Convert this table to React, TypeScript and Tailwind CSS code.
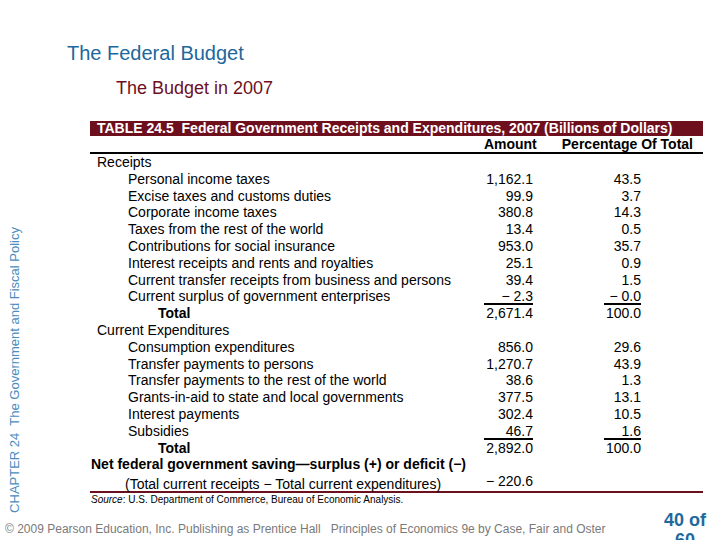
import React from 'react';

type Row = {
    label: string;
    indent: string;
    bold?: boolean;
    amt?: string;
    pct?: string;
    underline?: boolean;
};

const rows: Row[] = [
    { label: 'Receipts', indent: 'pl-[7px]' },
    { label: 'Personal income taxes', indent: 'pl-[38px]', amt: '1,162.1', pct: '43.5' },
    { label: 'Excise taxes and customs duties', indent: 'pl-[38px]', amt: '99.9', pct: '3.7' },
    { label: 'Corporate income taxes', indent: 'pl-[38px]', amt: '380.8', pct: '14.3' },
    { label: 'Taxes from the rest of the world', indent: 'pl-[38px]', amt: '13.4', pct: '0.5' },
    { label: 'Contributions for social insurance', indent: 'pl-[38px]', amt: '953.0', pct: '35.7' },
    { label: 'Interest receipts and rents and royalties', indent: 'pl-[38px]', amt: '25.1', pct: '0.9' },
    { label: 'Current transfer receipts from business and persons', indent: 'pl-[38px]', amt: '39.4', pct: '1.5' },
    { label: 'Current surplus of government enterprises', indent: 'pl-[38px]', amt: '− 2.3', pct: '− 0.0', underline: true },
    { label: 'Total', indent: 'pl-[68px]', bold: true, amt: '2,671.4', pct: '100.0' },
    { label: 'Current Expenditures', indent: 'pl-[7px]' },
    { label: 'Consumption expenditures', indent: 'pl-[38px]', amt: '856.0', pct: '29.6' },
    { label: 'Transfer payments to persons', indent: 'pl-[38px]', amt: '1,270.7', pct: '43.9' },
    { label: 'Transfer payments to the rest of the world', indent: 'pl-[38px]', amt: '38.6', pct: '1.3' },
    { label: 'Grants-in-aid to state and local governments', indent: 'pl-[38px]', amt: '377.5', pct: '13.1' },
    { label: 'Interest payments', indent: 'pl-[38px]', amt: '302.4', pct: '10.5' },
    { label: 'Subsidies', indent: 'pl-[38px]', amt: '46.7', pct: '1.6', underline: true },
    { label: 'Total', indent: 'pl-[68px]', bold: true, amt: '2,892.0', pct: '100.0' },
    { label: 'Net federal government saving—surplus (+) or deficit (−)', indent: 'pl-[1px]', bold: true },
];

function TableRow({ row }: { row: Row }) {
    return (
        <div className="flex h-[16.8px] leading-[16.8px]">
            <div className={`w-[363px] whitespace-nowrap ${row.indent} ${row.bold ? 'font-bold' : ''}`}>
                {row.label}
            </div>
            <div className="w-[80px] flex justify-end">
                <span className={row.underline ? 'w-[49px] text-right border-b-2 border-black' : ''}>{row.amt}</span>
            </div>
            <div className="w-[108px] flex justify-end">
                <span className={row.underline ? 'w-[37px] text-right border-b-2 border-black' : ''}>{row.pct}</span>
            </div>
        </div>
    );
}

export default function App() {
    return (
        <div className="w-[720px] h-[540px] overflow-hidden bg-white flex flex-col font-['Liberation_Sans',Arial,sans-serif] text-black">
            <div className="flex h-[507px]">
                {/* Running chapter label */}
                <div className="w-[28px] flex flex-col items-center justify-end">
                    <div className="[writing-mode:vertical-rl] rotate-180 text-[13px] leading-[15px] text-[#4a8cc0] whitespace-pre translate-y-[8px]">
                        {'CHAPTER 24  The Government and Fiscal Policy'}
                    </div>
                </div>

                <div className="flex-1 flex flex-col">
                    <h1 className="pt-[42px] pl-[39px] text-[20px] leading-[23px] text-[#21679b]">The Federal Budget</h1>
                    <h2 className="mt-[13px] pl-[88px] text-[18px] leading-[21px] text-[#6d0f1e]">The Budget in 2007</h2>

                    {/* Table */}
                    <div className="mt-[22px] ml-[62px] w-[613px] text-[14px]">
                        <div className="h-[15px] bg-[#6e0f1e] text-white font-bold leading-[15px] pl-[7px] whitespace-pre">
                            {'TABLE 24.5  Federal Government Receipts and Expenditures, 2007 (Billions of Dollars)'}
                        </div>
                        <div className="flex justify-end gap-[25px] pr-[10px] h-[16px] leading-[17px] font-bold border-b-2 border-black box-content">
                            <span>Amount</span>
                            <span>Percentage Of Total</span>
                        </div>
                        {rows.map((row, i) => (
                            <TableRow key={i} row={row} />
                        ))}
                        <div className="flex h-[18px] leading-[16.8px] border-b-2 border-[#6e0f1e] box-content">
                            <div className="w-[363px] pl-[35px] whitespace-nowrap pt-[3px]">
                                (Total current receipts − Total current expenditures)
                            </div>
                            <div className="w-[80px] text-right">− 220.6</div>
                        </div>
                        <div className="text-[10px] leading-[10px] mt-[2px] pl-[1px]">
                            <span className="italic">Source</span>: U.S. Department of Commerce, Bureau of Economic Analysis.
                        </div>
                    </div>
                </div>
            </div>

            {/* Footer */}
            <div className="flex-1 flex justify-between">
                <div className="pl-[5px] pt-[17px] text-[12px] leading-[14px] text-[#7a7a7a] whitespace-pre">
                    {'© 2009 Pearson Education, Inc. Publishing as Prentice Hall   Principles of Economics 9e by Case, Fair and Oster'}
                </div>
                <div className="pr-[14px] pt-[5px] text-[18px] leading-[20px] font-bold text-[#1d6a9e] text-center">
                    <div>40 of</div>
                    <div>60</div>
                </div>
            </div>
        </div>
    );
}
